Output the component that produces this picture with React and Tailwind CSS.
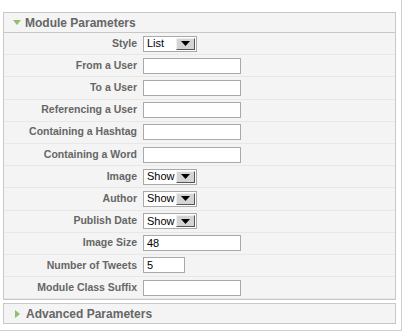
import React from "react";

const rows = [
  { label: "Style", type: "select", value: "List" },
  { label: "From a User", type: "text" },
  { label: "To a User", type: "text" },
  { label: "Referencing a User", type: "text" },
  { label: "Containing a Hashtag", type: "text" },
  { label: "Containing a Word", type: "text" },
  { label: "Image", type: "select", value: "Show" },
  { label: "Author", type: "select", value: "Show" },
  { label: "Publish Date", type: "select", value: "Show" },
  { label: "Image Size", type: "text", value: "48" },
  { label: "Number of Tweets", type: "short", value: "5" },
  { label: "Module Class Suffix", type: "text" },
];

function Select({ value }) {
  return (
    <div className="flex h-[16px] w-[54px] items-center border border-[#a9a9a9] bg-white">
      <span className="flex-1 pl-[3px] text-[11px] leading-none text-black">{value}</span>
      <div className="mr-[1px] flex h-[12px] w-[19px] items-center justify-center border border-t-[#f0f0f0] border-l-[#f0f0f0] border-r-[#555] border-b-[#555] bg-[#d4d4d4]">
        <svg width="9" height="5" viewBox="0 0 9 5">
          <path d="M0 0 H9 L4.5 5 Z" fill="#000" />
        </svg>
      </div>
    </div>
  );
}

function Field({ row }) {
  if (row.type === "select") return <Select value={row.value} />;
  const w = row.type === "short" ? "w-[42px]" : "w-[98px]";
  return (
    <div className={`flex h-[16px] ${w} items-center border border-[#a9a9a9] bg-white pl-[3px] text-[11px] leading-none text-black`}>
      {row.value || ""}
    </div>
  );
}

export default function App() {
  return (
    <div
      className="h-[336px] w-[409px] bg-white"
      style={{ fontFamily: '"Liberation Sans", Arial, sans-serif' }}
    >
      <div className="h-[331px] w-[402px] border-r border-b border-[#d0d0d0] pt-[12px] pl-[3px]">
        <div className="w-[393px] border border-[#c8c8c8] bg-[#f4f4f4]">
          <div className="flex h-[20px] items-center border-b border-[#c8c8c8] pl-[9px]">
            <svg width="8" height="5" viewBox="0 0 8 5" className="mr-[4px]">
              <path d="M0 0 H8 L4 5 Z" fill="#8cc06c" />
            </svg>
            <span className="text-[12px] font-bold text-[#666]">Module Parameters</span>
          </div>
          <div>
            {rows.map((r) => (
              <div key={r.label} className="flex h-[22.2px] items-center border-b border-[#e8e8e8]">
                <div className="w-[136px] pr-[3px] text-right text-[10.5px] font-bold text-[#666]">
                  {r.label}
                </div>
                <div className="pl-[3px]">
                  <Field row={r} />
                </div>
              </div>
            ))}
          </div>
        </div>
        <div className="mt-[3px] flex h-[21px] w-[393px] items-center border border-[#c8c8c8] bg-[#f4f4f4] pl-[11px]">
          <svg width="5" height="8" viewBox="0 0 5 8" className="mr-[6px]">
            <path d="M0 0 V8 L5 4 Z" fill="#8cc06c" />
          </svg>
          <span className="text-[12px] font-bold text-[#666]">Advanced Parameters</span>
        </div>
      </div>
    </div>
  );
}
